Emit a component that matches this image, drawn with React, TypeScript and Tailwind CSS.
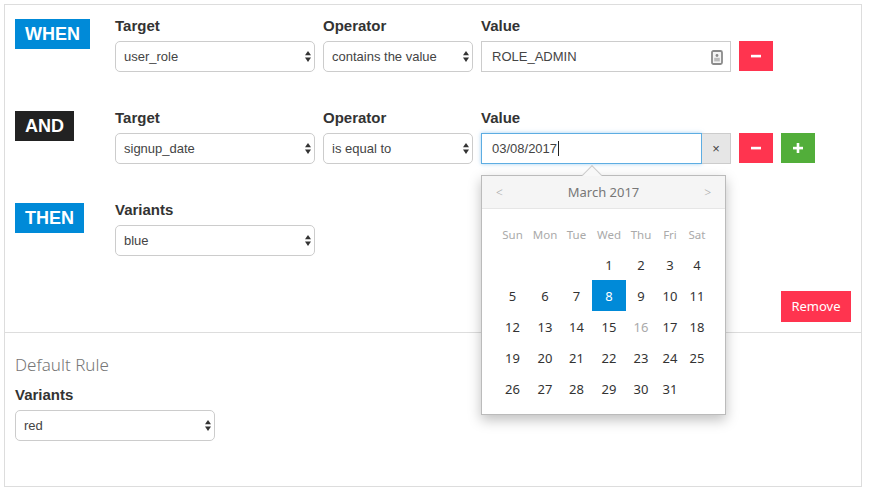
import React from "react";

const SANS = "font-['Liberation_Sans',Arial,sans-serif]";
const CAL = "font-['Noto_Sans',sans-serif]";

function Field({ label, className, children }: { label: string; className: string; children: React.ReactNode }) {
  return (
    <div className={`flex flex-col ${className}`}>
      <div className="h-[25px] text-[15px] leading-[20px] font-bold text-[#333]">{label}</div>
      {children}
    </div>
  );
}

function Select({ value }: { value: string }) {
  return (
    <div className="relative h-[31px] w-full">
      <select
        defaultValue={value}
        className={`h-full w-full appearance-none rounded-[5px] border border-[#ccc] bg-white pl-2 pr-6 text-[13px] text-[#444] outline-none ${SANS}`}
      >
        <option>{value}</option>
      </select>
      <svg className="absolute right-[4px] top-[10px]" width="6" height="11" viewBox="0 0 6 11" fill="#333">
        <path d="M3 0 L6 4.2 L0 4.2 Z" />
        <path d="M3 11 L6 6.6 L0 6.6 Z" />
      </svg>
    </div>
  );
}

function Badge({ text, color }: { text: string; color: string }) {
  return (
    <div className={`mt-[3px] h-[30px] self-start px-[10px] text-[18px] leading-[30px] font-bold text-white ${color}`}>
      {text}
    </div>
  );
}

function IconButton({ kind }: { kind: "minus" | "plus" }) {
  return (
    <button className={`flex h-[30px] w-[34px] items-center justify-center ${kind === "minus" ? "bg-[#ff344f]" : "bg-[#52ae3a]"}`}>
      <svg width="10" height="10" viewBox="0 0 10 10" fill="white">
        <rect x="0" y="3.8" width="10" height="2.6" />
        {kind === "plus" && <rect x="3.7" y="0" width="2.6" height="10" />}
      </svg>
    </button>
  );
}

const weekdays = ["Sun", "Mon", "Tue", "Wed", "Thu", "Fri", "Sat"];
const days: (number | null)[] = [null, null, null, ...Array.from({ length: 31 }, (_, i) => i + 1)];

function Calendar() {
  return (
    <div className={`absolute left-[476px] top-[170px] z-10 h-[240px] w-[245px] border border-[#bbb] bg-white shadow-[0_5px_12px_rgba(0,0,0,0.25)] ${CAL}`}>
      <div className="absolute left-[103px] top-[-8px] h-[14px] w-[14px] rotate-45 border-t border-l border-[#ccc] bg-[#f8f8f8]" />
      <div className="relative flex h-[33px] items-center justify-between border-b border-[#e6e6e6] bg-[#f5f5f5] px-[14px] pt-[1px] text-[#aaa]">
        <span className="text-[12px] font-light">&lt;</span>
        <span className="text-[13px] text-[#777]">March 2017</span>
        <span className="text-[12px] font-light">&gt;</span>
      </div>
      <div className="ml-[14px] mt-[11px] grid grid-cols-[33px_32px_31px_34px_30px_28px_26px] text-center">
        {weekdays.map((d) => (
          <div key={d} className="h-[29px] pt-[5px] text-[11.5px] leading-[20px] text-[#aaa]">{d}</div>
        ))}
        {days.map((d, i) => (
          <div
            key={i}
            className={`h-[31px] text-[13px] leading-[33px] ${d === 8 ? "bg-[#008ad8] text-white" : d === 16 ? "text-[#aaa]" : "text-[#333]"}`}
          >
            {d}
          </div>
        ))}
      </div>
    </div>
  );
}

export default function App() {
  return (
    <div className={`h-[493px] w-[871px] bg-white p-[4px] pr-[9px] pb-[6px] ${SANS}`}>
      <div className="relative flex h-full flex-col border border-[#ddd]">
        <div className="relative flex h-[328px] flex-col gap-[36px] border-b border-[#ddd] pt-[11px] pr-[10px] pl-[10px]">
          <div className="flex">
            <div className="w-[100px] shrink-0 flex"><Badge text="WHEN" color="bg-[#008ad8]" /></div>
            <Field label="Target" className="w-[200px]"><Select value="user_role" /></Field>
            <Field label="Operator" className="ml-[8px] w-[150px]"><Select value="contains the value" /></Field>
            <Field label="Value" className="ml-[8px] w-[250px]">
              <div className="relative flex h-[31px] items-center border border-[#ccc] bg-white pl-[10px] text-[13px] text-[#444]">
                ROLE_ADMIN
                <svg className="absolute right-[7px] top-[8px]" width="12" height="15" viewBox="0 0 12 15">
                  <rect x="1" y="1" width="10" height="13" rx="1.5" fill="#f4f4f4" stroke="#8a8a8a" strokeWidth="1.8" />
                  <circle cx="6" cy="5.5" r="1.4" fill="#888" />
                  <rect x="3.2" y="7.8" width="5.6" height="3.6" fill="#bbb" />
                </svg>
              </div>
            </Field>
            <div className="ml-[8px] pt-[25px]"><IconButton kind="minus" /></div>
          </div>
          <div className="flex">
            <div className="w-[100px] shrink-0 flex"><Badge text="AND" color="bg-[#222]" /></div>
            <Field label="Target" className="w-[200px]"><Select value="signup_date" /></Field>
            <Field label="Operator" className="ml-[8px] w-[150px]"><Select value="is equal to" /></Field>
            <Field label="Value" className="ml-[8px] w-[250px]">
              <div className="flex h-[31px]">
                <div className="flex w-[221px] items-center border border-[#5dade2] bg-white pl-[10px] text-[13px] text-[#444] shadow-[0_0_4px_rgba(102,175,233,0.6)]">
                  03/08/2017
                  <span className="ml-[1px] h-[15px] w-px bg-[#222]" />
                </div>
                <div className="flex w-[29px] items-center justify-center border-y border-r border-[#ccc] bg-[#e6e6e6] text-[13px] text-[#444]">×</div>
              </div>
            </Field>
            <div className="ml-[8px] flex gap-[8px] pt-[25px]">
              <IconButton kind="minus" />
              <IconButton kind="plus" />
            </div>
          </div>
          <div className="flex">
            <div className="w-[100px] shrink-0 flex"><Badge text="THEN" color="bg-[#008ad8]" /></div>
            <Field label="Variants" className="w-[200px]"><Select value="blue" /></Field>
          </div>
          <button className={`absolute right-[10px] bottom-[10px] h-[31px] w-[70px] bg-[#ff344f] text-[13px] text-white ${CAL}`}>Remove</button>
        </div>
        <div className="flex flex-col px-[10px]">
          <div className={`mt-[20px] h-[24px] text-[17px] leading-[24px] font-light text-[#777] ${CAL}`}>Default Rule</div>
          <Field label="Variants" className="mt-[8px] w-[200px]"><Select value="red" /></Field>
        </div>
        <Calendar />
      </div>
    </div>
  );
}
